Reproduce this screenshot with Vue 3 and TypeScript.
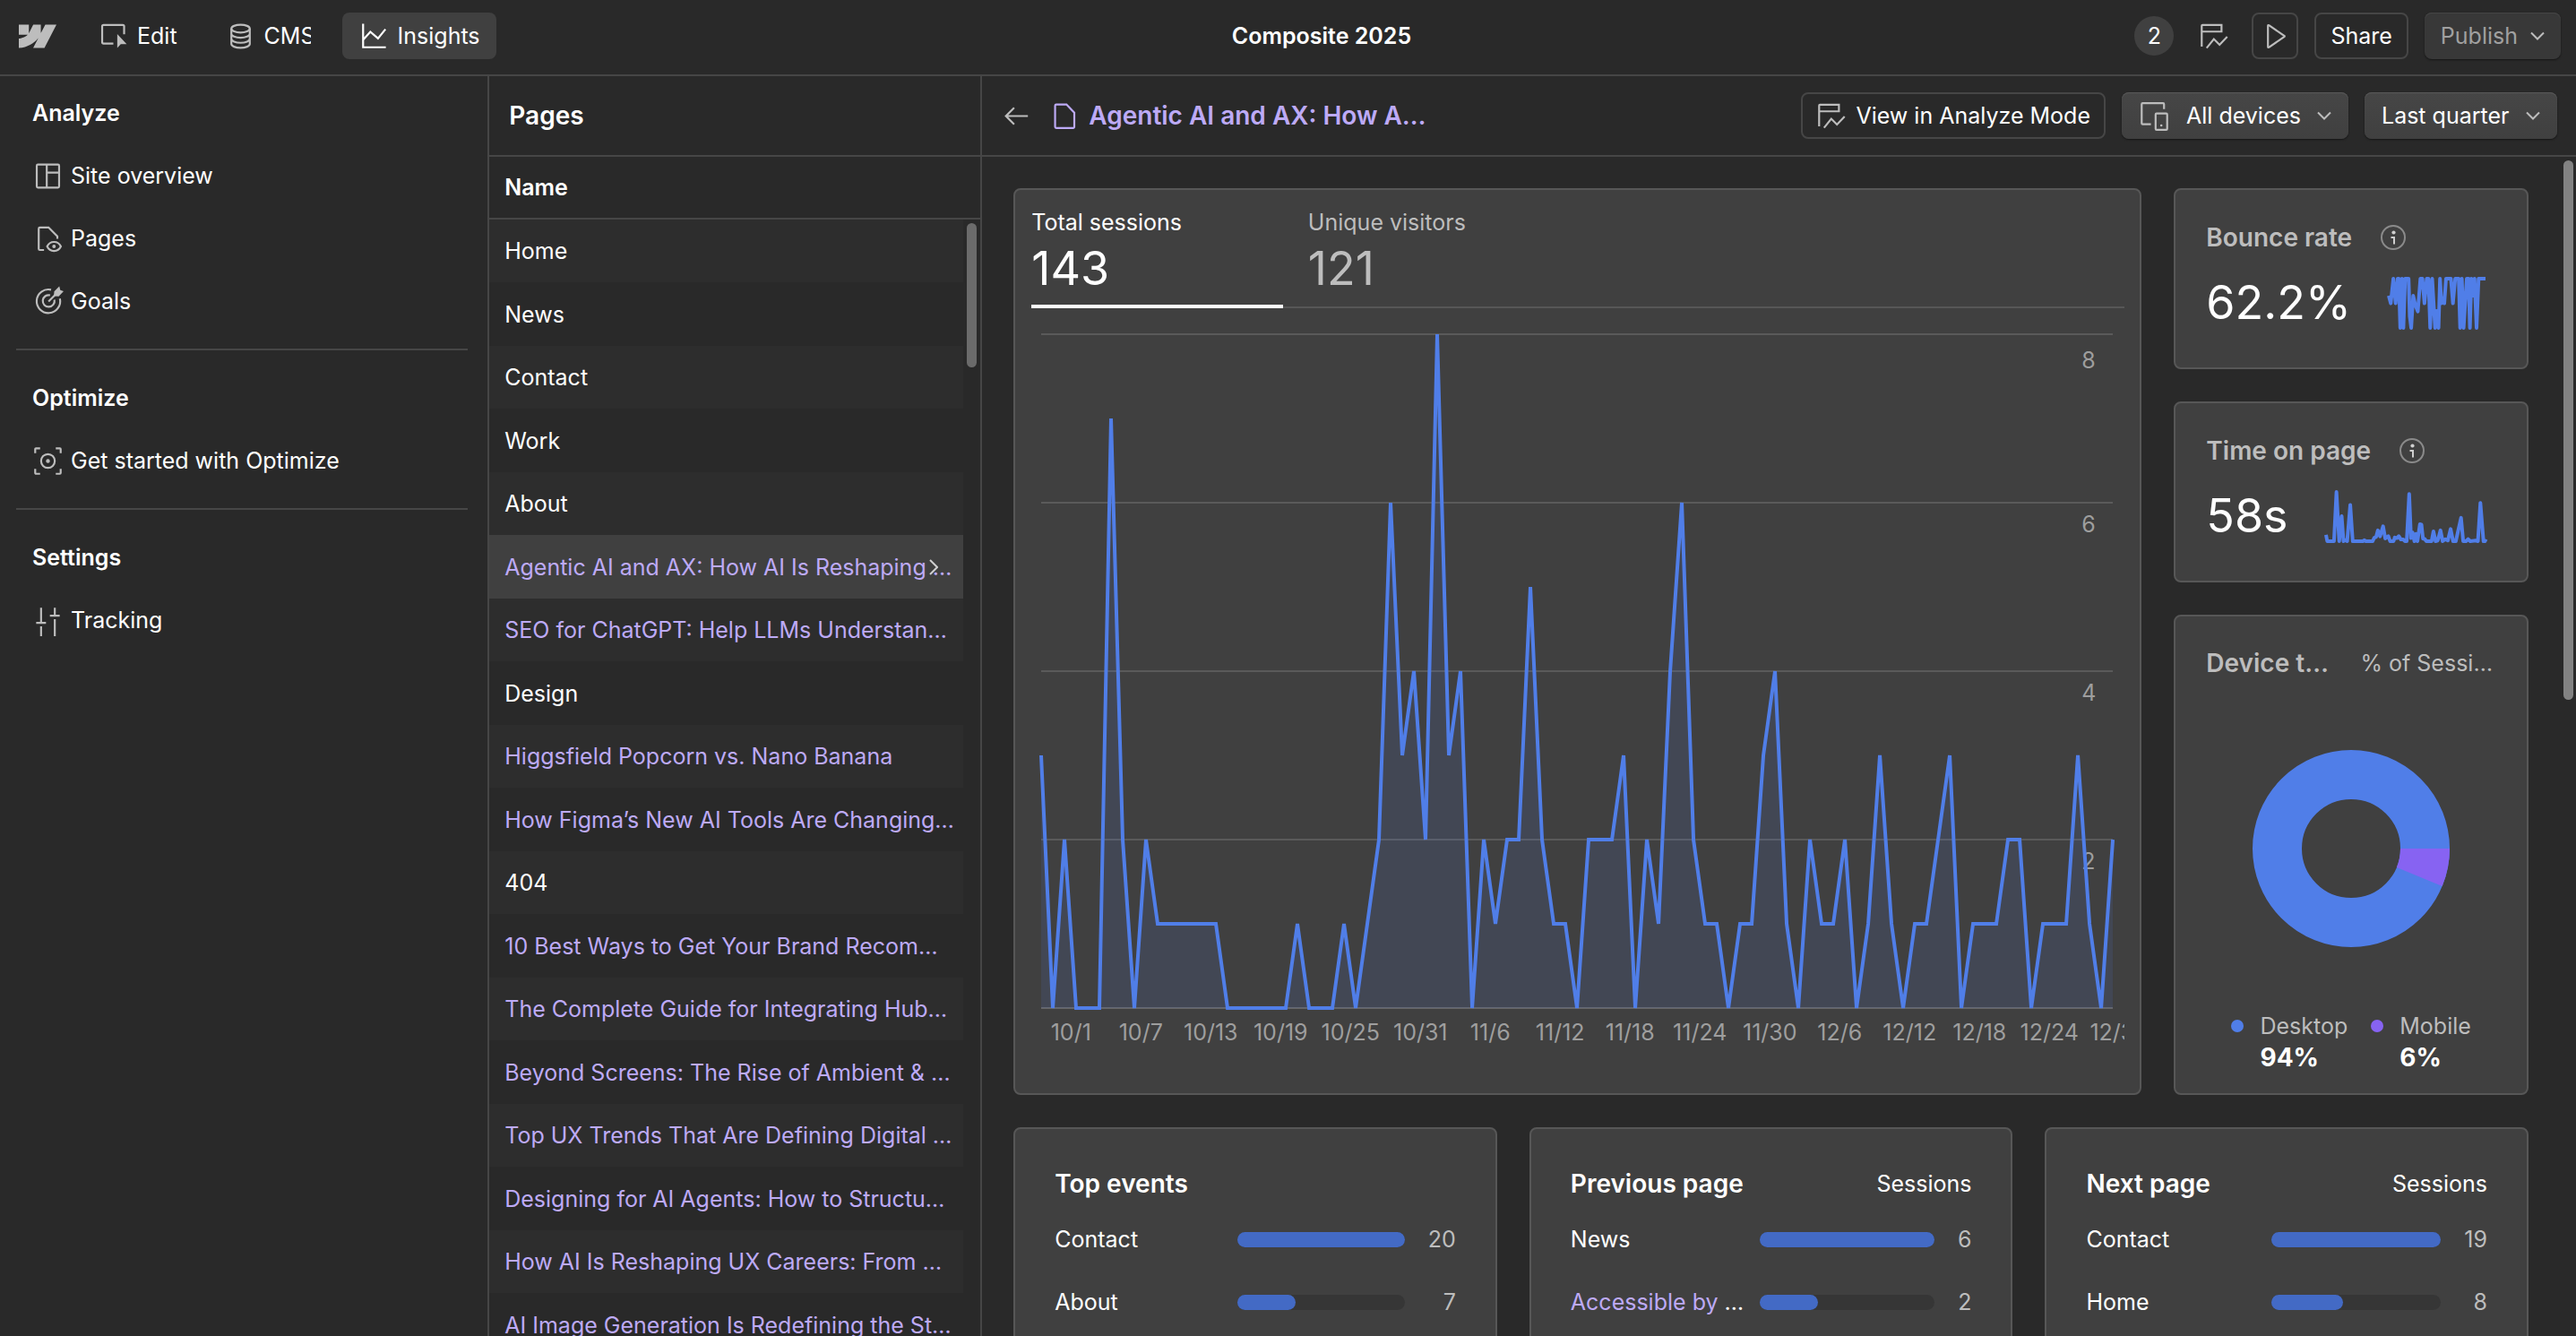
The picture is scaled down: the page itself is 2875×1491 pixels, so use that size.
<script setup lang="ts">
type Point = [number, number]

interface PageRow {
  name: string
  cms?: boolean
  selected?: boolean
}

interface RankRow {
  name: string
  value: number
  cms?: boolean
}

interface RankCard {
  title: string
  unit: string
  rows: RankRow[]
}

const pages: PageRow[] = [
  { name: 'Home' },
  { name: 'News' },
  { name: 'Contact' },
  { name: 'Work' },
  { name: 'About' },
  { name: 'Agentic AI and AX: How AI Is Reshaping …', cms: true, selected: true },
  { name: 'SEO for ChatGPT: Help LLMs Understan…', cms: true },
  { name: 'Design' },
  { name: 'Higgsfield Popcorn vs. Nano Banana', cms: true },
  { name: 'How Figma’s New AI Tools Are Changing…', cms: true },
  { name: '404' },
  { name: '10 Best Ways to Get Your Brand Recom…', cms: true },
  { name: 'The Complete Guide for Integrating Hub…', cms: true },
  { name: 'Beyond Screens: The Rise of Ambient & …', cms: true },
  { name: 'Top UX Trends That Are Defining Digital …', cms: true },
  { name: 'Designing for AI Agents: How to Structu…', cms: true },
  { name: 'How AI Is Reshaping UX Careers: From …', cms: true },
  { name: 'AI Image Generation Is Redefining the St…', cms: true },
]

const rankCards: RankCard[] = [
  { title: 'Top events', unit: '', rows: [{ name: 'Contact', value: 20 }, { name: 'About', value: 7 }] },
  { title: 'Previous page', unit: 'Sessions', rows: [{ name: 'News', value: 6 }, { name: 'Accessible by', value: 2, cms: true }] },
  { title: 'Next page', unit: 'Sessions', rows: [{ name: 'Contact', value: 19 }, { name: 'Home', value: 8 }] },
]

// Sessions per day over the quarter
const sessions: number[] = [
  3, 0, 2, 0, 0, 0, 7, 2, 0, 2, 1, 1, 1, 1, 1, 1, 0, 0, 0, 0, 0, 0, 1, 0, 0, 0, 1, 0, 1, 2, 6,
  3, 4, 2, 8, 3, 4, 0, 2, 1, 2, 2, 5, 2, 1, 1, 0, 2, 2, 2, 3, 0, 2, 1, 4, 6, 2, 1, 1, 0, 1, 1,
  3, 4, 1, 0, 2, 1, 1, 2, 0, 1, 3, 1, 0, 1, 1, 2, 3, 0, 1, 1, 1, 2, 2, 0, 1, 1, 1, 3, 1, 0, 2,
]
const maxSessions = 8
const lastDay = sessions.length - 1
const sessionLine = sessions.map((v, i) => `${i},${maxSessions - v}`).join(' ')
const sessionArea = `0,${maxSessions} ${sessionLine} ${lastDay},${maxSessions}`
const yLabels = [8, 6, 4, 2]
const xLabels = [
  '10/1', '10/7', '10/13', '10/19', '10/25', '10/31', '11/6', '11/12',
  '11/18', '11/24', '11/30', '12/6', '12/12', '12/18', '12/24', '12/30',
]

const toPoints = (points: Point[]): string => points.map((p) => p.join(',')).join(' ')

const bounceLine = toPoints([
  [0, 50], [7, 72], [16, 0], [24, 72], [31, 0], [35, 0], [40, 144], [46, 0], [51, 144], [57, 0], [69, 0],
  [73, 110], [78, 144], [85, 50], [92, 76], [101, 96], [110, 0], [117, 0], [124, 72], [132, 0], [138, 0], [144, 144],
  [151, 0], [161, 144], [166, 94], [173, 144], [178, 0], [183, 72], [188, 57], [193, 72], [199, 0], [216, 0], [223, 72],
  [231, 0], [243, 0], [248, 144], [254, 0], [260, 144], [271, 0], [277, 0], [282, 144], [287, 0], [293, 50], [298, 0], [305, 144],
  [312, 0], [336, 0],
])

const timeLine = toPoints([
  [0, 126], [4, 145], [26, 145], [34, 0], [43, 145], [51, 71], [57, 145], [62, 141], [69, 145], [79, 38],
  [87, 145], [120, 145], [125, 142], [130, 145], [152, 145], [157, 135], [163, 133], [169, 113], [176, 131], [186, 101],
  [193, 137], [203, 130], [209, 145], [220, 145], [224, 134], [231, 136], [237, 130], [244, 140], [252, 140], [257, 145],
  [263, 145], [271, 6], [277, 136], [282, 119], [288, 145], [293, 123], [298, 145], [306, 95], [311, 96], [316, 138],
  [321, 138], [327, 145], [344, 145], [350, 116], [357, 145], [364, 143], [373, 113], [380, 145], [389, 139], [397, 143],
  [406, 109], [414, 145], [423, 145], [440, 76], [447, 145], [456, 145], [463, 139], [470, 145], [488, 143], [495, 145],
  [503, 32], [513, 145], [518, 145], [521, 139],
])

const barWidth = (card: RankCard, row: RankRow): string => `${(row.value / card.rows[0].value) * 100}%`
</script>

<template>
  <div class="app">
    <header class="topbar">
      <svg class="logo" viewBox="0 4.5 24 15" aria-hidden="true">
        <path d="m24 4.515-7.658 14.97H9.149l3.205-6.204h-.144C9.566 16.713 5.621 18.973 0 19.485v-6.118s3.596-.213 5.71-2.435H0V4.515h6.417v5.278l.144-.001 2.622-5.277h4.854v5.244h.144l2.72-5.244H24Z" />
      </svg>
      <nav class="modes">
        <button class="mode" type="button">
          <svg class="icon" viewBox="0 0 16 16" aria-hidden="true">
            <path d="M8 11.7H3a.7.7 0 0 1-.7-.7V2.9a.7.7 0 0 1 .7-.7h9.8a.7.7 0 0 1 .7.7V7" />
            <path class="solid" d="M10 6.8 14.8 12h-3L10 13.9Z" />
          </svg>
          <span>Edit</span>
        </button>
        <button class="mode" type="button">
          <svg class="icon" viewBox="0 0 16 16" aria-hidden="true">
            <ellipse cx="8" cy="4.1" rx="4.7" ry="2" />
            <path d="M3.3 4.1v7.8c0 1.1 2.1 2 4.7 2s4.7-.9 4.7-2V4.1M3.3 6.7c0 1.1 2.1 2 4.7 2s4.7-.9 4.7-2M3.3 9.3c0 1.1 2.1 2 4.7 2s4.7-.9 4.7-2" />
          </svg>
          <span class="cut">CMS</span>
        </button>
        <button class="mode active" type="button">
          <svg class="icon" viewBox="0 0 16 16" aria-hidden="true">
            <path d="M2.4 1.6v12H14M2.6 9.6l3.5-3.9 3.9 3.4 3.8-4.7" />
          </svg>
          <span>Insights</span>
        </button>
      </nav>
      <h1 class="site">Composite 2025</h1>
      <div class="tools">
        <span class="count">2</span>
        <svg class="icon" viewBox="0 0 16 16" aria-hidden="true">
          <path d="M1.5 13.2V2.6a.4.4 0 0 1 .4-.4h9.7v3.4H1.6M4 14l3.7-4.6 2.9 2.9 3.9-4.1" />
        </svg>
        <button class="btn square" type="button" aria-label="Preview">
          <svg class="icon" viewBox="0 0 16 16" aria-hidden="true">
            <path d="M4.2 2.6v10.8a.3.3 0 0 0 .5.2l7.9-5.4a.3.3 0 0 0 0-.4L4.7 2.4a.3.3 0 0 0-.5.2Z" />
          </svg>
        </button>
        <button class="btn share" type="button">Share</button>
        <button class="btn filled publish" type="button" disabled>
          Publish
          <svg class="caret" viewBox="0 0 16 16" aria-hidden="true"><path d="m1 4.5 7 7 7-7" /></svg>
        </button>
      </div>
    </header>

    <div class="body">
      <aside class="sidebar">
        <section>
          <h2>Analyze</h2>
          <a href="#overview">
            <svg class="icon" viewBox="0 0 16 16" aria-hidden="true">
              <rect x="2.3" y="2.1" width="11.4" height="11.8" rx=".6" />
              <path d="M7.4 2.1v11.8M7.4 6.2h6.3" />
            </svg>
            Site overview
          </a>
          <a href="#pages">
            <svg class="icon" viewBox="0 0 16 16" aria-hidden="true">
              <path d="M6 13.7H3.9a.6.6 0 0 1-.6-.6V2.8a.6.6 0 0 1 .6-.6h4.4l4.5 4.5V8" />
              <path d="M7.6 11.9c.7-1.5 2-2.3 3.5-2.3s2.8.8 3.5 2.3c-.7 1.5-2 2.3-3.5 2.3s-2.8-.8-3.5-2.3Z" />
              <circle class="solid" cx="11.1" cy="11.9" r=".9" />
            </svg>
            Pages
          </a>
          <a href="#goals">
            <svg class="icon" viewBox="0 0 16 16" aria-hidden="true">
              <path d="M9.6 2A6 6 0 1 0 14.1 6.5M9.1 4.8a3 3 0 1 0 2.2 2.3M8.3 8l3.4-3.4" />
              <path class="solid" d="M11 5.3 11.2 2.9 13.8.2l.5 2 1.7.5-2.5 2.7Z" />
            </svg>
            Goals
          </a>
        </section>
        <section>
          <h2>Optimize</h2>
          <a href="#optimize">
            <svg class="icon" viewBox="0 0 16 16" aria-hidden="true">
              <path d="M1.5 4V1.9a.4.4 0 0 1 .4-.4H4M12 1.5h2.1a.4.4 0 0 1 .4.4V4M14.5 12v2.1a.4.4 0 0 1-.4.4H12M4 14.5H1.9a.4.4 0 0 1-.4-.4V12" />
              <circle cx="8" cy="8" r="3.5" />
              <circle class="solid" cx="8" cy="8" r="1" />
            </svg>
            Get started with Optimize
          </a>
        </section>
        <section>
          <h2>Settings</h2>
          <a href="#tracking">
            <svg class="icon" viewBox="0 0 16 16" aria-hidden="true">
              <path d="M4.5 1.5v7.7M2 9.2h5M4.5 11v5M11.5 1.5v4M9 5.5h5M11.5 7.3V16" />
            </svg>
            Tracking
          </a>
        </section>
      </aside>

      <section class="pages">
        <h2 class="bar">Pages</h2>
        <div class="page-list">
          <table>
            <thead>
              <tr><th scope="col">Name</th></tr>
            </thead>
            <tbody>
              <tr v-for="page in pages" :key="page.name" :class="{ cms: page.cms, selected: page.selected }">
                <td>
                  {{ page.name }}
                  <svg v-if="page.selected" class="chevron" viewBox="0 0 10 18" aria-hidden="true"><path d="m1 1 8 8-8 8" /></svg>
                </td>
              </tr>
            </tbody>
          </table>
          <div class="list-track"><div class="list-thumb"></div></div>
        </div>
      </section>

      <main class="detail">
        <div class="bar detail-bar">
          <button class="back" type="button" aria-label="Back">
            <svg class="icon" viewBox="0 0 16 16" aria-hidden="true"><path d="M13.8 8H2.6M6.8 3.8 2.6 8l4.2 4.2" /></svg>
          </button>
          <svg class="icon doc" viewBox="0 0 16 16" aria-hidden="true">
            <path d="M3.6 2.1h5.2l4 4.2v7.2a.6.6 0 0 1-.6.6H3.6a.6.6 0 0 1-.6-.6V2.7a.6.6 0 0 1 .6-.6Z" />
          </svg>
          <h2 class="page-title">Agentic AI and AX: How A…</h2>
          <div class="filters">
            <button class="btn analyze" type="button">
              <svg class="icon" viewBox="0 0 16 16" aria-hidden="true">
                <path d="M1.5 13.2V2.6a.4.4 0 0 1 .4-.4h9.7v3.4H1.6M4 14l3.7-4.6 2.9 2.9 3.9-4.1" />
              </svg>
              View in Analyze Mode
            </button>
            <label class="btn filled">
              <svg class="icon" viewBox="0 0 16 16" aria-hidden="true">
                <path d="M6.2 12.2H2a.5.5 0 0 1-.5-.5V1.900a.5.5 0 0 1 .5-.5h10.400a.5.5 0 0 1 .5.5v2.600" />
                <rect x="8.6" y="6.7" width="5.9" height="8.3" rx=".5" />
                <circle class="solid" cx="11.5" cy="12.8" r=".6" />
              </svg>
              <select aria-label="Devices"><option>All devices</option></select>
              <svg class="caret" viewBox="0 0 16 16" aria-hidden="true"><path d="m1 4.5 7 7 7-7" /></svg>
            </label>
            <label class="btn filled">
              <select aria-label="Period"><option>Last quarter</option></select>
              <svg class="caret" viewBox="0 0 16 16" aria-hidden="true"><path d="m1 4.5 7 7 7-7" /></svg>
            </label>
          </div>
        </div>

        <div class="scroll">
          <div class="grid">
            <section class="card chart-card">
              <div class="tabs">
                <button class="tab on" type="button"><span>Total sessions</span><strong>143</strong></button>
                <button class="tab" type="button"><span>Unique visitors</span><strong>121</strong></button>
              </div>
              <div class="plot">
                <div class="y-labels">
                  <span v-for="label in yLabels" :key="label">{{ label }}</span>
                </div>
                <svg viewBox="0 0 92 8" preserveAspectRatio="none" role="img" aria-label="Total sessions per day">
                  <line v-for="y in [0, 2, 4, 6]" :key="y" class="rule" x1="0" x2="92" :y1="y" :y2="y" />
                  <line class="rule base" x1="0" x2="92" y1="8" y2="8" />
                  <polygon class="area" :points="sessionArea" />
                  <polyline class="series" :points="sessionLine" />
                </svg>
              </div>
              <div class="x-labels">
                <span v-for="label in xLabels" :key="label">{{ label }}</span>
              </div>
            </section>

            <div class="side">
              <section class="card stat">
                <div class="stat-head">
                  <h3>Bounce rate</h3>
                  <svg class="info" viewBox="0 0 28 28" aria-hidden="true">
                    <circle class="ring" cx="14" cy="14" r="13" />
                    <circle class="fill" cx="14.5" cy="8.5" r="2.1" /><path d="M11.5 14H15v7.5" />
                  </svg>
                </div>
                <div class="stat-body">
                  <strong>62.2%</strong>
                  <svg class="spark" viewBox="0 0 336 144" preserveAspectRatio="none" aria-hidden="true">
                    <polyline class="series" :points="bounceLine" />
                  </svg>
                </div>
              </section>
              <section class="card stat">
                <div class="stat-head">
                  <h3>Time on page</h3>
                  <svg class="info" viewBox="0 0 28 28" aria-hidden="true">
                    <circle class="ring" cx="14" cy="14" r="13" />
                    <circle class="fill" cx="14.5" cy="8.5" r="2.1" /><path d="M11.5 14H15v7.5" />
                  </svg>
                </div>
                <div class="stat-body">
                  <strong>58s</strong>
                  <svg class="spark" viewBox="0 0 521 145" preserveAspectRatio="none" aria-hidden="true">
                    <polyline class="series" :points="timeLine" />
                  </svg>
                </div>
              </section>
              <section class="card devices">
                <div class="devices-head">
                  <h3>Device t…</h3>
                  <span>% of Sessi…</span>
                </div>
                <svg class="donut" viewBox="-110 -110 220 220" role="img" aria-label="Desktop 94%, Mobile 6%">
                  <circle class="desktop" r="82.5" />
                  <path class="mobile" d="M55 0H110A110 110 0 0 1 101.63 42.1L50.81 21.05A55 55 0 0 0 55 0Z" />
                </svg>
                <ul class="legend">
                  <li><i class="dot"></i><span>Desktop</span><b>94%</b></li>
                  <li><i class="dot violet"></i><span>Mobile</span><b>6%</b></li>
                </ul>
              </section>
            </div>

            <section v-for="card in rankCards" :key="card.title" class="card rank">
              <div class="rank-head">
                <h3>{{ card.title }}</h3>
                <span>{{ card.unit }}</span>
              </div>
              <ul>
                <li v-for="row in card.rows" :key="row.name">
                  <span class="label"><span :class="{ cms: row.cms }">{{ row.name }}</span>{{ row.cms ? ' …' : '' }}</span>
                  <span class="meter"><span :style="{ width: barWidth(card, row) }"></span></span>
                  <span class="value">{{ row.value }}</span>
                </li>
              </ul>
            </section>
          </div>
          <div class="main-track"><div class="main-thumb"></div></div>
        </div>
      </main>
    </div>
  </div>
</template>

<style>
body {
  margin: 0;
  background: #292929;
}
</style>

<style scoped>
.app {
  --line: #464646;
  --muted: #bdbdbd;
  --violet-text: #bdaaf6;
  --blue: #507ee8;
  display: flex;
  flex-direction: column;
  height: 100vh;
  overflow: hidden;
  background: #292929;
  color: #fff;
  font: 400 25px/30px Inter, sans-serif;
}

h1, h2, h3, ul {
  margin: 0;
  padding: 0;
  font-size: inherit;
  font-weight: 600;
  list-style: none;
}

button, select {
  margin: 0;
  padding: 0;
  border: 0;
  background: none;
  color: inherit;
  font: inherit;
}

select {
  appearance: none;
}

.icon {
  flex: none;
  width: 35px;
  height: 35px;
  fill: none;
  stroke: var(--muted);
  overflow: visible;
}

.solid {
  fill: var(--muted);
  stroke: none;
}

.caret {
  flex: none;
  width: 16px;
  height: 16px;
  fill: none;
  stroke: var(--muted);
  stroke-width: 2;
}

.topbar {
  flex: none;
  display: flex;
  align-items: center;
  height: 80px;
  padding: 0 17px 3px 21px;
  border-bottom: 2px solid var(--line);
}

.logo {
  flex: none;
  width: 42px;
  height: 27px;
  margin-right: 28px;
  fill: var(--muted);
}

.modes {
  display: flex;
  gap: 17px;
}

.mode {
  display: flex;
  align-items: center;
  gap: 9px;
  height: 52px;
  padding: 0 18px;
  border-radius: 8px;
}

.mode.active {
  background: #404040;
}

.mode.active .icon {
  stroke: #fff;
}

.cut {
  width: 52px;
  overflow: hidden;
}

.site {
  flex: 1;
  padding-left: 14px;
  text-align: center;
}

.tools {
  display: flex;
  align-items: center;
  gap: 18px;
}

.count {
  display: grid;
  place-items: center;
  width: 44px;
  height: 44px;
  margin-right: 10px;
  border-radius: 50%;
  background: #404040;
}

.tools > .icon {
  margin-right: 6px;
}

.btn {
  box-sizing: border-box;
  display: flex;
  align-items: center;
  gap: 18px;
  height: 52px;
  padding: 0 16px;
  border: 2px solid #464646;
  border-radius: 8px;
  white-space: nowrap;
}

.btn.square {
  justify-content: center;
  width: 52px;
  padding: 0;
}

.btn.filled {
  border-width: 0;
  padding: 0 19px;
  background: linear-gradient(#464646, #404040);
  box-shadow: inset 0 1px 1px #5a5a5a, 0 1px 2px #151515;
}

.btn.publish {
  gap: 14px;
  padding: 0 18px;
  background: #383838;
  box-shadow: inset 0 1px 1px #484848, 0 1px 2px #151515;
  color: #a0a0a0;
}

.btn.analyze {
  gap: 9px;
  padding: 0 15px;
}

.body {
  flex: 1;
  display: flex;
  min-height: 0;
}

.sidebar {
  flex: none;
  box-sizing: border-box;
  width: 19%;
  padding: 6px 22px 0 18px;
  border-right: 2px solid var(--line);
}

.sidebar section + section {
  margin-top: 18px;
  padding-top: 18px;
  border-top: 2px solid var(--line);
}

.sidebar h2,
.sidebar a {
  display: flex;
  align-items: center;
  gap: 8px;
  height: 70px;
  padding-left: 18px;
  color: #fff;
  text-decoration: none;
}

.bar {
  flex: none;
  box-sizing: border-box;
  display: flex;
  align-items: center;
  height: 90px;
  border-bottom: 2px solid var(--line);
  font-size: 28px;
}

.pages {
  flex: none;
  box-sizing: border-box;
  display: flex;
  flex-direction: column;
  width: 550px;
  border-right: 2px solid var(--line);
}

.pages .bar {
  padding-left: 22px;
}

.page-list {
  position: relative;
  flex: 1;
  min-height: 0;
  overflow: hidden;
}

table {
  width: 100%;
  border-spacing: 0;
  table-layout: fixed;
}

th {
  height: 68px;
  padding: 0 17px;
  border-bottom: 2px solid var(--line);
  font-weight: 600;
  text-align: left;
}

td {
  position: relative;
  height: 70px;
  padding: 0 0 0 17px;
  border-right: 19px solid transparent;
  background-clip: padding-box;
  white-space: nowrap;
}

tr:nth-child(odd) td {
  background-color: #2d2d2d;
}

tr:nth-child(even) td {
  height: 71px;
}

tr.selected td {
  background-color: #404040;
}

.cms {
  color: var(--violet-text);
}

.chevron {
  position: absolute;
  top: 27px;
  right: 28px;
  width: 10px;
  height: 18px;
  fill: none;
  stroke: #d0d0d0;
  stroke-width: 2;
}

.list-track {
  position: absolute;
  inset: 74px 4px 0 auto;
  width: 11px;
}

.list-thumb {
  height: 13%;
  border-radius: 6px;
  background: #6b6b6b;
}

.detail {
  flex: 1;
  display: flex;
  flex-direction: column;
  min-width: 0;
}

.detail-bar {
  padding: 0 21px;
  font-size: 25px;
}

.back {
  display: flex;
  margin-right: 19px;
}

.doc {
  margin-right: 9px;
  stroke: var(--violet-text);
}

.page-title {
  flex: 1;
  color: var(--violet-text);
  font-size: 28px;
  white-space: nowrap;
}

.filters {
  display: flex;
  gap: 18px;
}

.scroll {
  flex: 1;
  display: flex;
  min-height: 0;
  overflow: hidden;
}

.grid {
  flex: 1;
  display: grid;
  grid-template-columns: repeat(12, minmax(0, 1fr));
  align-content: start;
  gap: 36px;
  min-width: 0;
  padding: 35px 36px 36px 35px;
}

.main-track {
  flex: none;
  width: 11px;
  padding: 4px 3px 4px 3px;
}

.main-thumb {
  height: 46%;
  border-radius: 6px;
  background: #828282;
}

.card {
  border: 2px solid #575757;
  border-radius: 8px;
  background: #404040;
}

.chart-card {
  grid-column: span 9;
  padding: 0 17px 53px 18px;
}

.tabs {
  display: flex;
  gap: 28px;
  border-bottom: 2px solid #575757;
}

.tab {
  display: flex;
  flex-direction: column;
  align-items: flex-start;
  gap: 7px;
  width: 23%;
  margin-bottom: -2px;
  padding: 21px 0 10px;
  border-bottom: 4px solid transparent;
  color: var(--muted);
}

.tab.on {
  border-color: #fff;
  color: #fff;
}

.tab strong,
.stat-body strong {
  font-size: 52px;
  line-height: 60px;
  font-weight: 400;
}

.plot {
  position: relative;
  height: 752px;
  margin: 29px 13px 0 11px;
}

.plot svg {
  position: relative;
  display: block;
  width: 100%;
  height: 100%;
  overflow: visible;
}

.rule,
.series {
  fill: none;
  vector-effect: non-scaling-stroke;
}

.rule {
  stroke: #5a5a5a;
  stroke-width: 2;
}

.rule.base {
  stroke: #666;
}

.area {
  fill: #507ee8;
  fill-opacity: 0.12;
}

.series {
  stroke: var(--blue);
  stroke-width: 4;
}

.y-labels {
  position: absolute;
  inset: 0 19px 0 auto;
  display: grid;
  grid-template-rows: repeat(4, 1fr);
  color: #9e9e9e;
}

.y-labels span {
  padding-top: 9px;
}

.y-labels span:first-child {
  padding-top: 14px;
}

.x-labels {
  display: flex;
  margin: 12px 0 0 5px;
  overflow: hidden;
  color: #9e9e9e;
}

.x-labels span {
  flex: none;
  width: calc((100% - 19px) * 6 / 92);
  text-align: center;
}

.side {
  grid-column: span 3;
  display: flex;
  flex-direction: column;
  gap: 36px;
}

h3 {
  font-size: 28px;
  line-height: 36px;
  white-space: nowrap;
}

.stat {
  padding: 35px 46px 42px 34px;
  color: var(--muted);
}

.stat-head {
  display: flex;
  align-items: center;
  gap: 32px;
}

.info {
  width: 28px;
  height: 28px;
  fill: none;
  stroke: #cfcfcf;
  stroke-width: 2;
}

.info .ring {
  stroke: #8a8a8a;
}

.info .fill {
  fill: #cfcfcf;
  stroke: none;
}

.stat-body {
  display: flex;
  align-items: center;
  gap: 42px;
  margin-top: 25px;
}

.stat-body strong {
  color: #fff;
}

.spark {
  flex: 1;
  min-width: 0;
  height: 55px;
  overflow: visible;
}

.spark .series {
  stroke-linejoin: round;
}

.devices {
  display: flex;
  flex-direction: column;
  align-items: center;
  padding: 34px 34px 22px;
  color: var(--muted);
}

.devices-head {
  align-self: stretch;
  display: flex;
  align-items: center;
  justify-content: space-between;
  padding-right: 4px;
}

.donut {
  width: 220px;
  height: 220px;
  margin: 79px 0 73px;
}

.desktop {
  fill: none;
  stroke: var(--blue);
  stroke-width: 55;
}

.mobile {
  fill: #8763f2;
}

.legend {
  display: flex;
  gap: 26px;
  font-weight: 400;
}

.legend li {
  display: grid;
  grid-template-columns: 14px auto;
  align-items: center;
  column-gap: 18px;
  row-gap: 2px;
}

.legend b {
  grid-column: 2;
  color: #fff;
  font-size: 28px;
  line-height: 36px;
}

.dot {
  width: 14px;
  height: 14px;
  border-radius: 50%;
  background: var(--blue);
}

.dot.violet {
  background: #8763f2;
}

.rank {
  grid-column: span 4;
  padding: 43px 44px;
}

.rank-head {
  display: flex;
  align-items: center;
  justify-content: space-between;
  margin-bottom: 9px;
}

.rank ul {
  display: grid;
  grid-template-columns: minmax(0, 1fr) minmax(0, 1fr) auto;
  grid-auto-rows: 70px;
  align-items: center;
  font-weight: 400;
}

.rank li {
  display: contents;
}

.rank .label {
  overflow: hidden;
  white-space: nowrap;
}

.meter {
  display: flex;
  height: 17px;
  margin-right: 17px;
  border-radius: 9px;
  background: #363636;
}

.meter span {
  border-radius: 9px;
  background: #436ac5;
}

.value {
  padding-left: 9px;
  color: var(--muted);
  text-align: right;
}
</style>
